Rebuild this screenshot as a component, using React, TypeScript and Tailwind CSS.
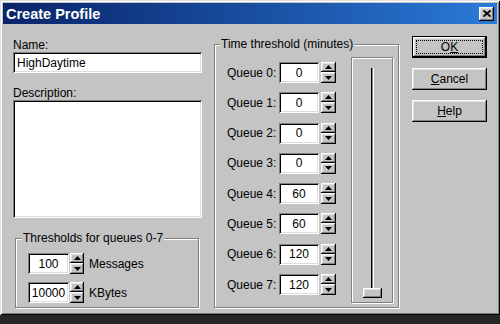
import React from "react";

const face = "bg-[#c4c4c4]";
const sunken =
  "bg-white shadow-[inset_1px_1px_0_#808080,inset_-1px_-1px_0_#ffffff,inset_2px_2px_0_#000000,inset_-2px_-2px_0_#dcdcdc]";
const raised =
  "bg-[#c4c4c4] shadow-[inset_-1px_-1px_0_#000000,inset_1px_1px_0_#ffffff,inset_-2px_-2px_0_#808080,inset_2px_2px_0_#e2e2e2]";
const etched = "border border-[#808080] shadow-[1px_1px_0_#ffffff,inset_1px_1px_0_#ffffff]";

const queues = [
  { label: "Queue 0:", value: "0" },
  { label: "Queue 1:", value: "0" },
  { label: "Queue 2:", value: "0" },
  { label: "Queue 3:", value: "0" },
  { label: "Queue 4:", value: "60" },
  { label: "Queue 5:", value: "60" },
  { label: "Queue 6:", value: "120" },
  { label: "Queue 7:", value: "120" },
];

function Spin({ wide }: { wide?: boolean }) {
  return (
    <div className={wide ? "ml-[2px] flex h-[21px] w-[15px] flex-col" : "ml-[1px] flex h-[21px] w-[14px] flex-col"}>
      <div className={`${raised} flex h-[10px] items-center justify-center`}>
        <svg width="7" height="4" viewBox="0 0 7 4">
          <path d="M3.5 0L7 4H0z" fill="#000" />
        </svg>
      </div>
      <div className={`${raised} flex h-[11px] items-center justify-center`}>
        <svg width="7" height="4" viewBox="0 0 7 4">
          <path d="M0 0H7L3.5 4z" fill="#000" />
        </svg>
      </div>
    </div>
  );
}

function Button({ first, rest, isDefault }: { first: string; rest: string; isDefault?: boolean }) {
  if (isDefault) {
    return (
      <div className="h-[22px] w-[75px] border border-black">
        <div className={`${raised} flex h-full w-full items-center justify-center p-[3px]`}>
          <div className="flex h-full w-full items-center justify-center border border-dotted border-black">
            <span>
              {rest}
              <span className="underline">{first}</span>
            </span>
          </div>
        </div>
      </div>
    );
  }
  return (
    <div className={`${raised} flex h-[22px] w-[75px] items-center justify-center`}>
      <span>
        <span className="underline">{first}</span>
        {rest}
      </span>
    </div>
  );
}

export default function App() {
  return (
    <div className="h-[324px] w-[500px] overflow-hidden bg-[#262626] font-['Liberation_Sans',Arial,sans-serif] text-[12px] leading-[14px] text-black">
      <div
        className={`${face} h-[315px] w-[500px] px-[3px] pt-[3px] shadow-[inset_1px_1px_0_#e0e0e0,inset_-1px_-1px_0_#000000,inset_2px_2px_0_#ffffff,inset_-2px_-2px_0_#808080]`}
      >
        {/* title bar */}
        <div className="flex h-[21px] items-center justify-between bg-gradient-to-r from-[#0a246a] to-[#2b7ad8] pl-[3px] pr-[3px]">
          <span className="text-[14.5px] font-bold leading-[18px] text-white">Create Profile</span>
          <div className={`${raised} flex h-[14px] w-[15px] items-center justify-center`}>
            <svg width="8" height="7" viewBox="0 0 8 7">
              <path d="M0.5 0.5L7.5 6.5M7.5 0.5L0.5 6.5" stroke="#000" strokeWidth="1.8" />
            </svg>
          </div>
        </div>

        <div className="flex items-start pl-[10px]">
          {/* left column */}
          <div className="flex w-[189px] flex-col pt-[14px]">
            <span>Name:</span>
            <div className={`${sunken} flex h-[21px] items-center pl-[4px]`}>HighDaytime</div>
            <span className="mt-[13px]">Description:</span>
            <div className={`${sunken} h-[118px]`} />

            <div className={`${etched} relative ml-[2px] mt-[20px] h-[70px] w-[184px] pl-[12px] pt-[14px]`}>
              <span className={`${face} absolute left-[6px] top-[-8px] px-[1px]`}>Thresholds for queues 0-7</span>
              <div className="flex flex-col gap-[8px]">
                <div className="flex items-center">
                  <div className={`${sunken} flex h-[21px] w-[41px] items-center justify-center`}>100</div>
                  <Spin />
                  <span className="ml-[5px]">Messages</span>
                </div>
                <div className="flex items-center">
                  <div className={`${sunken} flex h-[21px] w-[41px] items-center justify-center`}>10000</div>
                  <Spin />
                  <span className="ml-[5px]">KBytes</span>
                </div>
              </div>
            </div>
          </div>

          {/* time threshold group */}
          <div className={`${etched} relative ml-[12px] mt-[20px] flex h-[264px] w-[185px]`}>
            <span className={`${face} absolute left-[5px] top-[-8px] px-[1px]`}>Time threshold (minutes)</span>
            <div className="flex flex-col gap-[9.3px] pl-[12px] pt-[17px]">
              {queues.map((q) => (
                <div key={q.label} className="flex items-center">
                  <span className="w-[52px]">{q.label}</span>
                  <div className={`${sunken} flex h-[21px] w-[40px] items-center justify-center`}>{q.value}</div>
                  <Spin wide />
                </div>
              ))}
            </div>
            <div className={`${etched} ml-[15px] mt-[12px] flex h-[246px] w-[42px] flex-col items-center pt-[10px]`}>
              <div className="w-[2px] flex-1 border-l border-l-black border-r border-r-[#808080] shadow-[1px_0_0_#ffffff]" />
              <div className={`${raised} mb-[4px] h-[10px] w-[19px]`} />
            </div>
          </div>

          {/* buttons */}
          <div className="ml-[13px] mt-[12px] flex flex-col gap-[10px]">
            <Button first="K" rest="O" isDefault />
            <Button first="C" rest="ancel" />
            <Button first="H" rest="elp" />
          </div>
        </div>
      </div>
    </div>
  );
}
